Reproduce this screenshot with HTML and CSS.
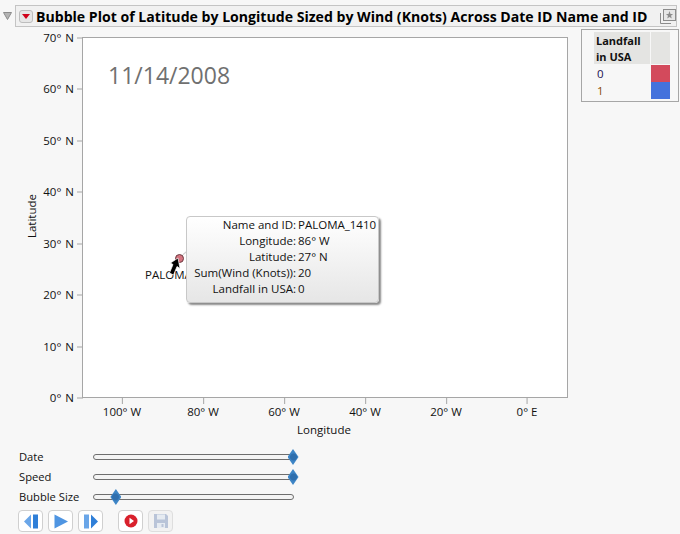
FILE: index.html
```html
<!DOCTYPE html>
<html lang="en">

<head>
    <meta charset="UTF-8">
    <title>Bubble Plot</title>
    <link rel="stylesheet" href="styles.css">
</head>

<body>
    <div class="title-row">
        <svg class="disclosure" width="9" height="8" viewBox="0 0 9 8"><path d="M0.5 0.5H8.5L4.5 7.5Z" fill="#b4b4b4" stroke="#8c8c8c"/></svg>
        <div class="title-bar">
            <span class="menu-btn"><svg width="8" height="5" viewBox="0 0 8 5"><path d="M0 0H8L4 5Z" fill="#d0021b"/></svg></span>
            <span class="title-text">Bubble Plot of Latitude by Longitude Sized by Wind (Knots) Across Date ID Name and ID</span>
            <svg class="pin" width="16" height="16" viewBox="0 0 16 16">
                <path d="M0.5 5V15.5H11" fill="none" stroke="#8c8c8c"/>
                <rect x="3.5" y="1.5" width="12" height="11" fill="#e6e6e6" stroke="#8c8c8c"/>
                <path d="M9.5 3L10.5 6H13.1L11 7.8L11.8 10.6L9.5 9L7.2 10.6L8 7.8L5.9 6H8.5Z" fill="#8c8c8c"/>
            </svg>
        </div>
    </div>

    <div class="main">
        <div class="chart">
            <div class="y-title">Latitude</div>
            <div class="plot">
                <div class="date-label">11/14/2008</div>

                <span class="y-tick" style="top: -1px">70° N</span>
                <span class="y-tick" style="top: 50px">60° N</span>
                <span class="y-tick" style="top: 102px">50° N</span>
                <span class="y-tick" style="top: 153px">40° N</span>
                <span class="y-tick" style="top: 205px">30° N</span>
                <span class="y-tick" style="top: 256px">20° N</span>
                <span class="y-tick" style="top: 308px">10° N</span>
                <span class="y-tick" style="top: 359px">0° N</span>

                <span class="x-tick" style="left: 39px">100° W</span>
                <span class="x-tick" style="left: 120px">80° W</span>
                <span class="x-tick" style="left: 201px">60° W</span>
                <span class="x-tick" style="left: 282px">40° W</span>
                <span class="x-tick" style="left: 363px">20° W</span>
                <span class="x-tick" style="left: 444px">0° E</span>

                <span class="leader"></span>
                <span class="bubble"></span>
                <span class="bubble-label">PALOMA_1410</span>
                <svg class="cursor" width="13" height="19" viewBox="0 0 13 19">
                    <path d="M10 1L12 11.5L9 9.5L5.5 18L1.5 16L5 7.5L2.5 6Z" fill="#000" stroke="#fff" stroke-width="0.7"/>
                </svg>

                <div class="tooltip">
                    <span class="tip-key">Name and ID:</span><span>PALOMA_1410</span>
                    <span class="tip-key">Longitude:</span><span>86° W</span>
                    <span class="tip-key">Latitude:</span><span>27° N</span>
                    <span class="tip-key">Sum(Wind (Knots)):</span><span>20</span>
                    <span class="tip-key">Landfall in USA:</span><span>0</span>
                </div>
            </div>
            <div class="x-title">Longitude</div>
        </div>

        <div class="legend">
            <div class="legend-head">Landfall<br>in USA</div>
            <div class="legend-head-swatch"></div>
            <div class="legend-val val-0">0</div>
            <div class="swatch swatch-red"></div>
            <div class="legend-val val-1">1</div>
            <div class="swatch swatch-blue"></div>
        </div>
    </div>

    <div class="controls">
        <div class="slider-row">
            <span class="slider-label">Date</span>
            <div class="track"><span class="thumb" style="left: 100%"></span></div>
        </div>
        <div class="slider-row">
            <span class="slider-label">Speed</span>
            <div class="track"><span class="thumb" style="left: 100%"></span></div>
        </div>
        <div class="slider-row">
            <span class="slider-label">Bubble Size</span>
            <div class="track"><span class="thumb" style="left: 11%"></span></div>
        </div>
        <div class="buttons">
            <button class="btn"><svg width="14" height="15" viewBox="0 0 14 15"><path d="M7 0.5V14.5L0 7.5Z" fill="#6aa6e8"/><rect x="9" y="0.5" width="5" height="14" fill="#2f7fd8"/></svg></button>
            <button class="btn"><svg width="14" height="15" viewBox="0 0 14 15"><path d="M0.5 0.5L14 7.5L0.5 14.5Z" fill="#4f95e2"/></svg></button>
            <button class="btn"><svg width="14" height="15" viewBox="0 0 14 15"><rect x="0" y="0.5" width="5" height="14" fill="#6aa6e8"/><path d="M7 0.5L14 7.5L7 14.5Z" fill="#2f7fd8"/></svg></button>
            <button class="btn btn-gap"><svg width="14" height="14" viewBox="0 0 14 14"><circle cx="7" cy="7" r="6.5" fill="#d9202c"/><path d="M5.5 3.8L10 7L5.5 10.2Z" fill="#fff"/></svg></button>
            <button class="btn btn-off"><svg width="16" height="16" viewBox="0 0 16 16"><path d="M1 1H13L15 3V15H1Z" fill="#b9c4d8"/><rect x="4" y="1.5" width="8" height="5" fill="#e6ebf1"/><rect x="4" y="10" width="8" height="5" fill="#e6ebf1"/><rect x="8.5" y="11" width="2" height="3" fill="#b9c4d8"/></svg></button>
        </div>
    </div>
</body>

</html>
```

FILE: styles.css
```css
* {
    box-sizing: border-box;
}

body {
    margin: 0;
    height: 534px;
    overflow: hidden;
    background: #f7f7f7;
    color: #111;
    font-family: "Open Sans", "Noto Sans", sans-serif;
    font-size: 11.5px;
}

.title-row {
    display: flex;
    align-items: center;
    padding: 5px 3px 0 3px;
}

.disclosure {
    margin-right: 3px;
    flex: none;
}

.title-bar {
    flex: 1;
    height: 22px;
    display: flex;
    align-items: center;
    padding: 0 0 0 3px;
    background: #f1f1f1;
    border: 1px solid #c4c4c4;
}

.menu-btn {
    width: 14px;
    height: 13px;
    margin: 0 3px 0 0;
    display: flex;
    align-items: center;
    justify-content: center;
    background: #e6e6e6;
    border: 1px solid #bdbdbd;
    border-radius: 3px;
}

.title-text {
    flex: 1;
    font-size: 14.1px;
    font-weight: bold;
    color: #000;
    white-space: nowrap;
}

.main {
    display: flex;
    align-items: flex-start;
}

.chart {
    position: relative;
    width: 581px;
    height: 417px;
    padding: 10px 0 0 82px;
}

.plot {
    position: relative;
    width: 486px;
    height: 361px;
    background: #fff;
    border: 1px solid #a6a6a6;
}

.y-title {
    position: absolute;
    left: 31px;
    top: 189px;
    transform: translate(-50%, -50%) rotate(-90deg);
}

.x-title {
    margin-top: 24px;
    margin-left: -1px;
    text-align: center;
    width: 486px;
    line-height: 16px;
}

.date-label {
    position: absolute;
    left: 25px;
    top: 20px;
    font-size: 23px;
    line-height: 34px;
    color: #707070;
}

.y-tick {
    position: absolute;
    right: 100%;
    margin-right: 9px;
    word-spacing: 1px;
    white-space: nowrap;
    transform: translateY(-50%);
}

.y-tick::after {
    content: "";
    position: absolute;
    left: calc(100% + 3px);
    top: 50%;
    width: 6px;
    height: 1px;
    background: #a6a6a6;
}

.x-tick {
    position: absolute;
    top: 100%;
    margin-top: 7px;
    white-space: nowrap;
    transform: translateX(-50%);
    line-height: 15px;
}

.x-tick::before {
    content: "";
    position: absolute;
    left: 50%;
    bottom: 100%;
    width: 1px;
    height: 7px;
    background: #a6a6a6;
}

.bubble {
    position: absolute;
    left: 92px;
    top: 216px;
    width: 9px;
    height: 9px;
    border-radius: 50%;
    background: #d4737f;
    border: 1px solid #6b3a40;
}

.leader {
    position: absolute;
    left: 99px;
    top: 214px;
    width: 7px;
    height: 1px;
    background: #cfcfcf;
    transform: rotate(-40deg);
}

.bubble-label {
    position: absolute;
    left: 62px;
    top: 229px;
    line-height: 16px;
    white-space: nowrap;
}

.cursor {
    position: absolute;
    left: 85px;
    top: 219px;
}

.tooltip {
    position: absolute;
    left: 103px;
    top: 178px;
    width: 193px;
    height: 87px;
    padding: 0 1px 0 6px;
    display: grid;
    grid-template-columns: 103px 1fr;
    column-gap: 2px;
    grid-auto-rows: 16px;
    line-height: 16px;
    white-space: nowrap;
    background: linear-gradient(#ffffff, #e6e6e6);
    border: 1px solid #c8c8c8;
    border-radius: 4px;
    box-shadow: 2px 2px 2px #8a8a8a;
}

.tip-key {
    text-align: right;
}

.legend {
    width: 98px;
    height: 73px;
    margin-top: 2px;
    padding: 2px 8px 2px 2px;
    display: grid;
    grid-template-columns: 56px 19px;
    grid-template-rows: 32px 18px 17px;
    column-gap: 1px;
    justify-content: end;
    background: #f7f7f7;
    border: 1px solid #a6a6a6;
}

.legend-head {
    padding: 1px 0 0 2px;
    font-size: 11px;
    font-weight: bold;
    line-height: 16px;
    background: #e4e4e2;
}

.legend-head-swatch {
    background: #e4e4e2;
}

.legend-val {
    padding-left: 3px;
    line-height: 17px;
}

.val-0 {
    margin-top: 1px;
    color: #1a1050;
}

.val-1 {
    color: #8a4a00;
}

.swatch-red {
    background: #d34a5c;
    margin-top: 1px;
}

.swatch-blue {
    background: #4472dc;
}

.controls {
    padding: 3px 0 0 19px;
}

.slider-row {
    display: flex;
    align-items: center;
    height: 20px;
}

.slider-label {
    width: 74px;
    font-size: 11.2px;
    line-height: 20px;
}

.track {
    position: relative;
    width: 201px;
    height: 6px;
    background: #f4f4f4;
    border: 1px solid #6e6e6e;
    border-radius: 3px;
}

.thumb {
    position: absolute;
    top: 50%;
    width: 11px;
    height: 16px;
    margin-left: -5.5px;
    margin-top: -8px;
    background: radial-gradient(circle, #2f6fae 0 3px, #3d85c6 4px);
    clip-path: polygon(50% 0, 100% 50%, 50% 100%, 0 50%);
}

.buttons {
    display: flex;
    gap: 5px;
    margin-top: 3px;
    margin-left: -1px;
}

.btn {
    width: 25px;
    height: 22px;
    padding: 0;
    display: flex;
    align-items: center;
    justify-content: center;
    background: #fff;
    border: 1px solid #d0d0d0;
    border-radius: 4px;
}

.btn-gap {
    margin-left: 10px;
}

.btn-off {
    background: #f2f2f2;
    border-color: #dedede;
}
```
